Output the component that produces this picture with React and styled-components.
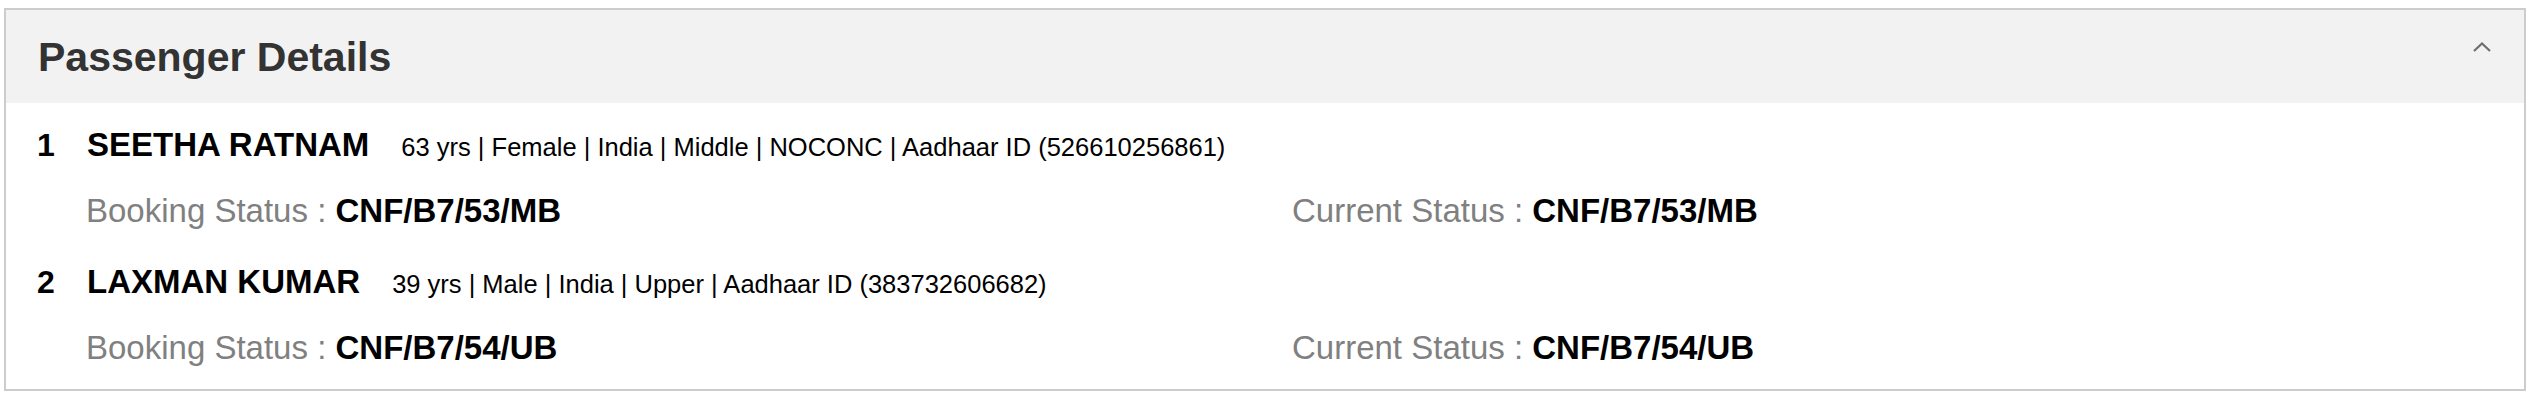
import React from "react";
import styled, { createGlobalStyle } from "styled-components";

const GlobalStyle = createGlobalStyle`
  body {
    margin: 0;
    background: #ffffff;
    font-family: "Liberation Sans", Arial, Helvetica, sans-serif;
  }
`;

const Card = styled.section`
  box-sizing: border-box;
  width: 2522px;
  margin: 8px 0 0 4px;
  border: 2px solid #cccccc;
  background: #ffffff;
`;

const Header = styled.div`
  display: flex;
  align-items: flex-start;
  justify-content: space-between;
  height: 93px;
  padding: 0 33px 0 32px;
  background: #f2f2f2;
`;

const Title = styled.h2`
  margin: 0;
  padding-top: 24px;
  font-size: 41px;
  font-weight: 700;
  line-height: 47px;
  color: #333333;
`;

const Toggle = styled.button`
  margin-top: 32px;
  padding: 0;
  border: 0;
  background: none;
  line-height: 0;
  cursor: pointer;
`;

const Body = styled.div`
  padding: 23px 0 22px 0;
`;

const Passenger = styled.div`
  margin-bottom: ${(p) => (p.$last ? "0" : "33px")};
`;

const NameRow = styled.div`
  display: flex;
  align-items: baseline;
  padding-left: 31px;
  color: #000000;
`;

const Index = styled.span`
  width: 50px;
  font-size: 32px;
  font-weight: 700;
`;

const Name = styled.span`
  font-size: 33px;
  font-weight: 700;
  margin-right: 32px;
`;

const Info = styled.span`
  font-size: 25.5px;
`;

const StatusRow = styled.div`
  display: grid;
  grid-template-columns: 1206px 1fr;
  padding-left: 80px;
  margin-top: 28px;
`;

const Status = styled.div`
  font-size: 33px;
  color: #808080;
`;

const Value = styled.b`
  color: #000000;
`;

const passengers = [
  {
    name: "SEETHA RATNAM",
    info: "63 yrs | Female | India | Middle | NOCONC | Aadhaar ID (526610256861)",
    booking: "CNF/B7/53/MB",
    current: "CNF/B7/53/MB",
  },
  {
    name: "LAXMAN KUMAR",
    info: "39 yrs | Male | India | Upper | Aadhaar ID (383732606682)",
    booking: "CNF/B7/54/UB",
    current: "CNF/B7/54/UB",
  },
];

function Chevron() {
  return (
    <svg width="18" height="10" viewBox="0 0 18 10" fill="none">
      <path d="M1 9 L9 1.5 L17 9" stroke="#6f6f6f" strokeWidth="2.2" />
    </svg>
  );
}

export default function App() {
  return (
    <>
      <GlobalStyle />
      <Card>
        <Header>
          <Title>Passenger Details</Title>
          <Toggle aria-label="Collapse">
            <Chevron />
          </Toggle>
        </Header>
        <Body>
          {passengers.map((p, i) => (
            <Passenger key={p.name} $last={i === passengers.length - 1}>
              <NameRow>
                <Index>{i + 1}</Index>
                <Name>{p.name}</Name>
                <Info>{p.info}</Info>
              </NameRow>
              <StatusRow>
                <Status>
                  Booking Status : <Value>{p.booking}</Value>
                </Status>
                <Status>
                  Current Status : <Value>{p.current}</Value>
                </Status>
              </StatusRow>
            </Passenger>
          ))}
        </Body>
      </Card>
    </>
  );
}
